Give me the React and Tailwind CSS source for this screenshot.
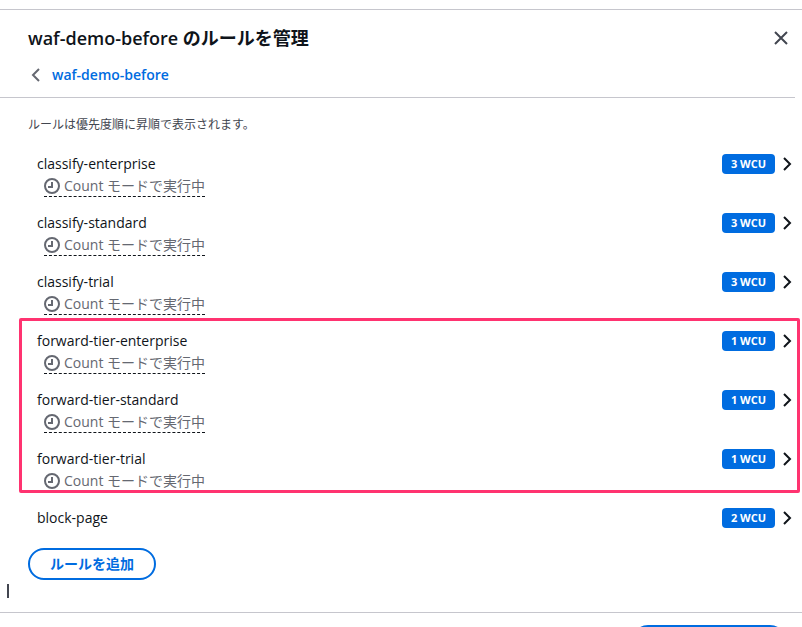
import { useState } from "react";

const COUNT_MODE = "Count モードで実行中";

const classifyRules = [
  { name: "classify-enterprise", wcu: 3, count: true },
  { name: "classify-standard", wcu: 3, count: true },
  { name: "classify-trial", wcu: 3, count: true },
];

const forwardRules = [
  { name: "forward-tier-enterprise", wcu: 1, count: true },
  { name: "forward-tier-standard", wcu: 1, count: true },
  { name: "forward-tier-trial", wcu: 1, count: true },
];

const blockRules = [{ name: "block-page", wcu: 2, count: false }];

const CloseIcon = () => (
  <svg className="size-4" viewBox="0 0 16 16" fill="none" stroke="currentColor" strokeWidth="2">
    <path d="M2 2l12 12M14 2L2 14" />
  </svg>
);

const BackIcon = () => (
  <svg className="size-4" viewBox="0 0 16 16" fill="none" stroke="currentColor" strokeWidth="2">
    <path d="M11 2L5 8l6 6" />
  </svg>
);

const OpenIcon = () => (
  <svg className="size-4" viewBox="0 0 16 16" fill="none" stroke="currentColor" strokeWidth="2">
    <path d="M5 2l6 6-6 6" />
  </svg>
);

const ClockIcon = () => (
  <svg className="size-4" viewBox="0 0 16 16" fill="none" stroke="currentColor" strokeWidth="2">
    <circle cx="8" cy="8" r="7" />
    <path d="M8 4v5H4" />
  </svg>
);

const RuleRow = ({ rule, selected, onSelect }) => (
  <li className="flex items-start justify-between pb-[15px]">
    <div className="flex flex-col items-start">
      <span className="leading-[22px]">{rule.name}</span>
      {rule.count && (
        <span className="ml-[7px] flex h-[22px] items-center gap-1 border-b border-dashed border-[#0f141a] text-[#656871]">
          <ClockIcon />
          {COUNT_MODE}
        </span>
      )}
    </div>
    <div className="flex h-[22px] items-center gap-1">
      <span className="flex h-5 items-center rounded bg-[#006ce0] px-[9px] text-[11px] font-bold text-white">
        {rule.wcu} WCU
      </span>
      <button
        type="button"
        aria-label={rule.name}
        aria-expanded={selected === rule.name}
        onClick={() => onSelect(rule.name)}
      >
        <OpenIcon />
      </button>
    </div>
  </li>
);

const RuleList = ({ rules, selected, onSelect }) => (
  <ul>
    {rules.map((rule) => (
      <RuleRow key={rule.name} rule={rule} selected={selected} onSelect={onSelect} />
    ))}
  </ul>
);

export default function App() {
  const [selected, setSelected] = useState(null);

  return (
    <div className="flex h-screen flex-col overflow-hidden bg-white pt-[9px] font-['Open_Sans','Noto_Sans_CJK_JP',sans-serif] text-sm text-[#0f141a]">
      <header className="border-t border-[#c6c6cd]">
        <div className="mr-[7px] border-b border-[#c6c6cd] pt-4 pb-[11px] pl-7">
          <div className="flex items-center justify-between pr-[6px]">
            <h1 className="text-lg leading-6 font-semibold">waf-demo-before のルールを管理</h1>
            <button type="button" aria-label="閉じる" className="text-[#424650]">
              <CloseIcon />
            </button>
          </div>
          <a href="#rules" className="mt-[14px] flex items-center gap-2 leading-[22px] font-semibold text-[#006ce0]">
            <span className="text-[#656871]">
              <BackIcon />
            </span>
            waf-demo-before
          </a>
        </div>
      </header>

      <main id="rules" className="pt-[17px]">
        <p className="pl-7 text-xs leading-5 text-[#424650]">ルールは優先度順に昇順で表示されます。</p>
        <div className="mt-[18px] pr-[7px] pl-[37px]">
          <RuleList rules={classifyRules} selected={selected} onSelect={setSelected} />
          <div className="relative">
            <RuleList rules={forwardRules} selected={selected} onSelect={setSelected} />
            <div className="pointer-events-none absolute -top-3 -right-[5px] bottom-[14px] -left-[18px] rounded-xs border-3 border-[#ff3370]" />
          </div>
          <RuleList rules={blockRules} selected={selected} onSelect={setSelected} />
        </div>
        <button
          type="button"
          className="mt-[4px] ml-7 flex h-8 items-center rounded-full border-2 border-[#006ce0] px-5 font-semibold text-[#006ce0]"
        >
          ルールを追加
        </button>
        <div className="mt-1 ml-[7px] h-[14px] w-[2px] bg-[#424650]" />
      </main>

      <footer className="mt-[14px] flex shrink-0 justify-end border-t border-[#c6c6cd] pt-3 pr-4">
        <button type="button" aria-label="ルールを保存" className="h-8 w-[154px] rounded-full bg-[#006ce0]" />
      </footer>
    </div>
  );
}
